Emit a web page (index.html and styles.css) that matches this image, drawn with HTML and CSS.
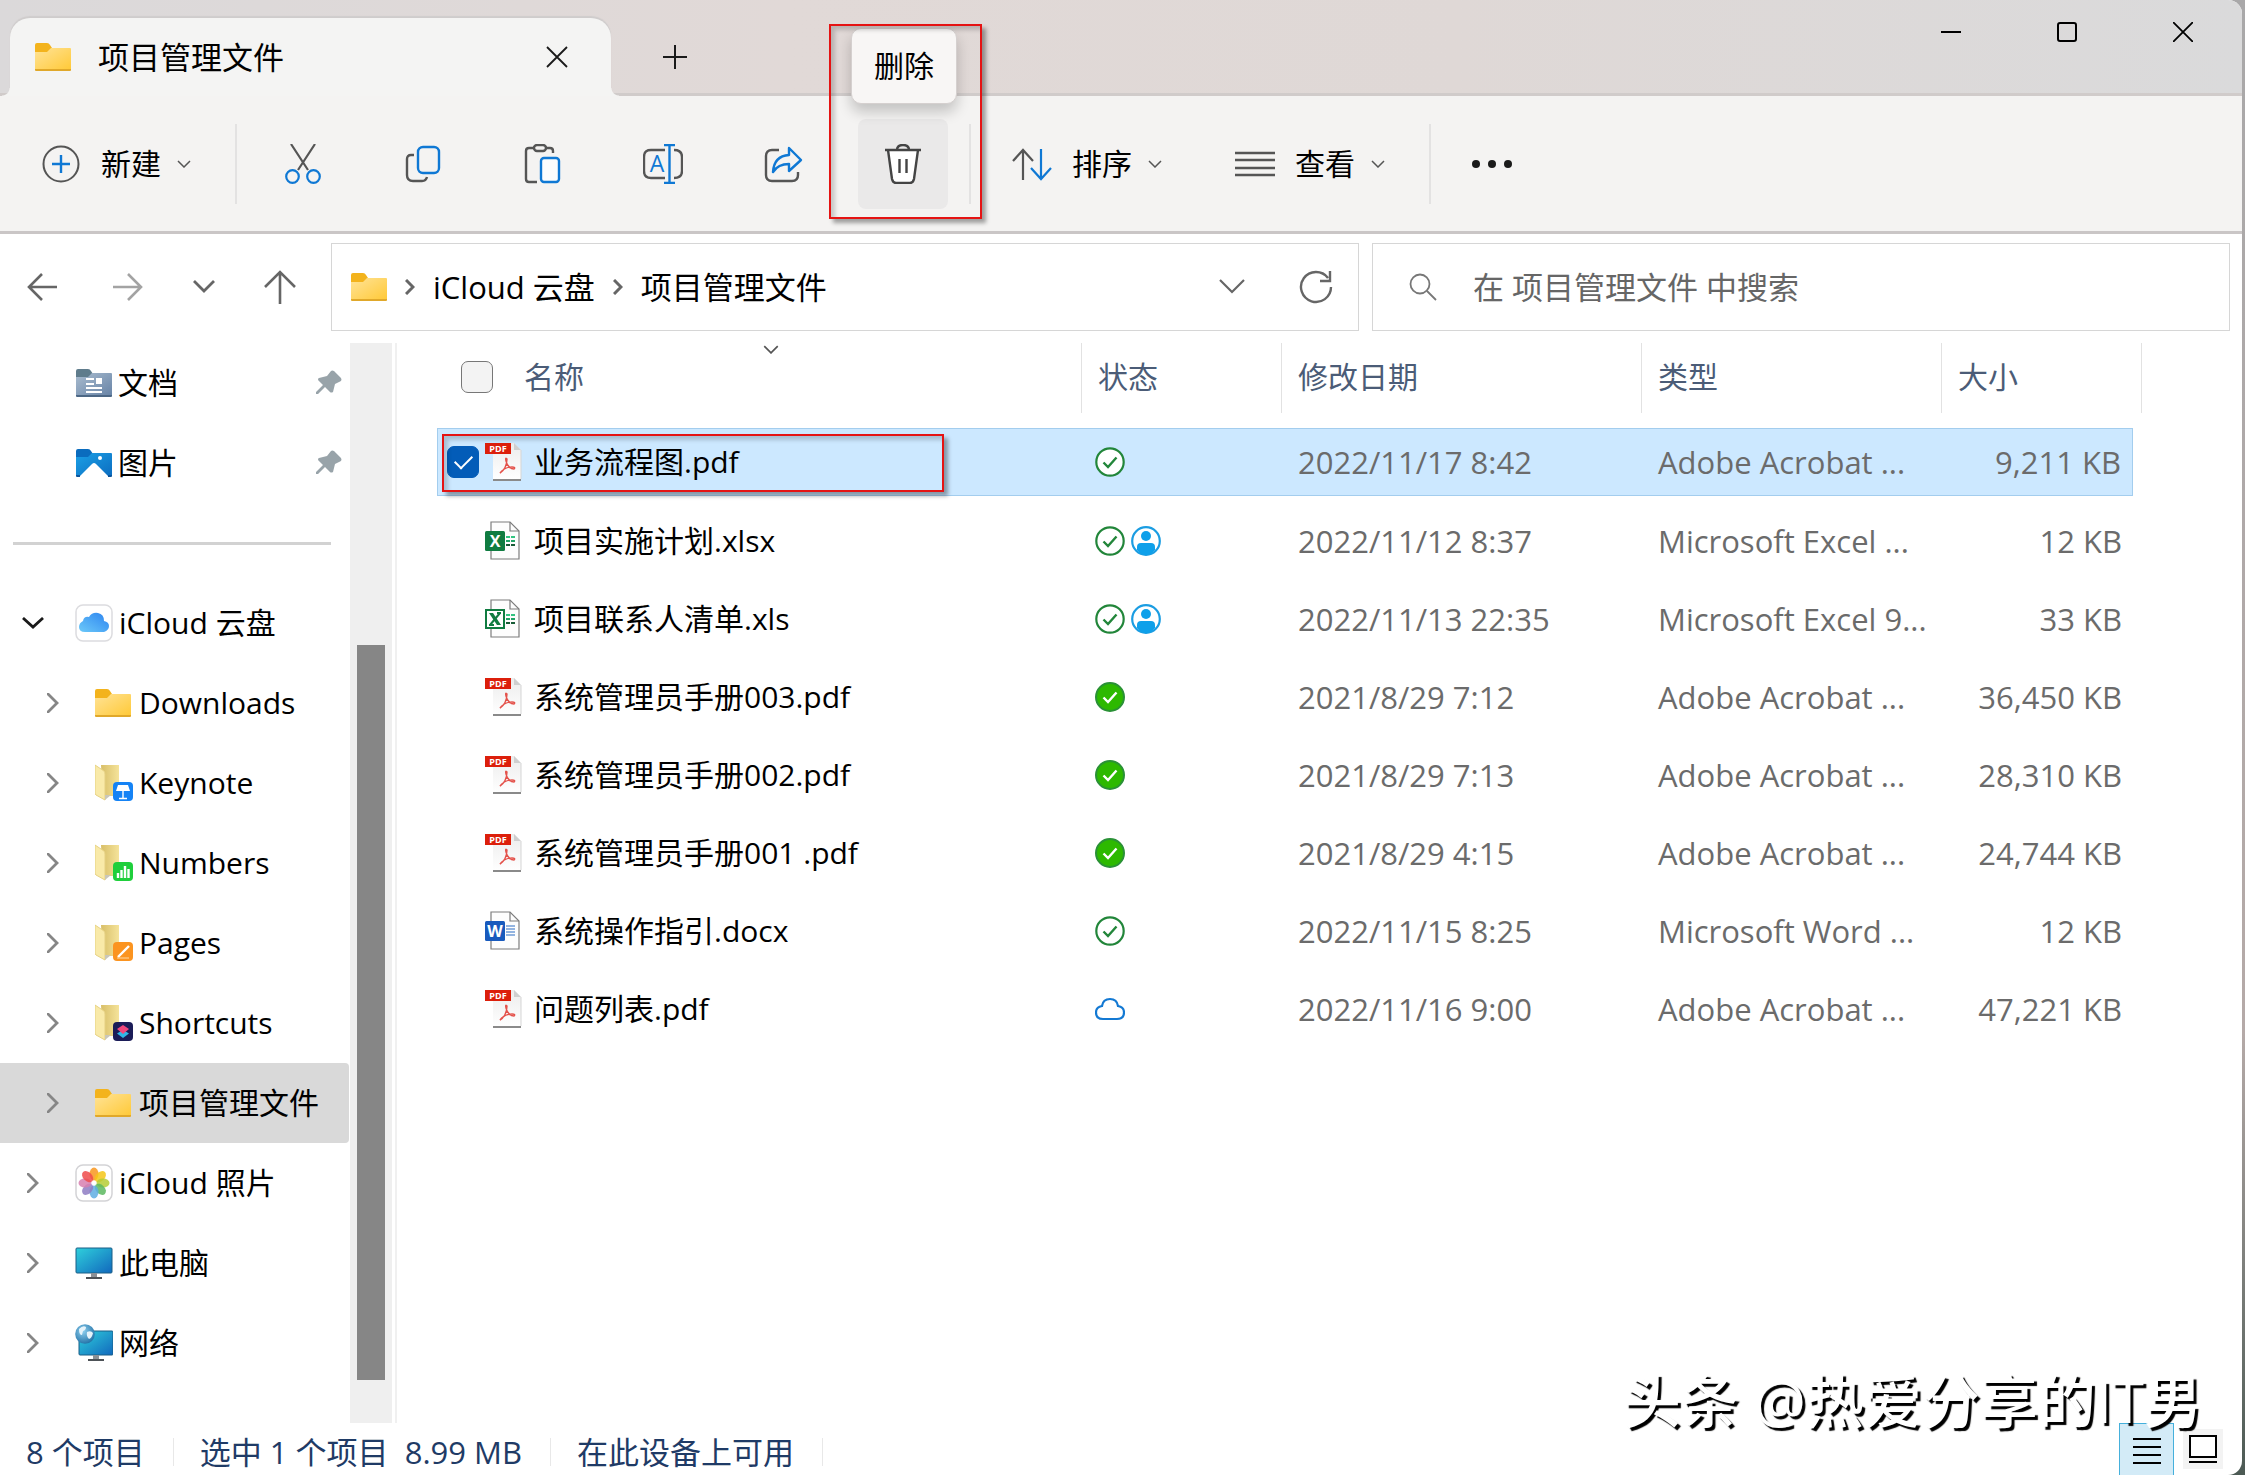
FILE: index.html
```
<!DOCTYPE html>
<html lang="zh-CN">
    <head>
        <meta charset="UTF-8">
        <meta name="viewport" content="width=device-width, initial-scale=1.0">
        <title>项目管理文件</title>
        <link rel="stylesheet" href="styles.css">
    </head>
    <body>
        <!-- shared icons -->
        <svg class="defs" width="0" height="0">
            <defs>
                <linearGradient id="gFolder" x1="0" y1="0" x2="1" y2="1">
                    <stop offset="0" stop-color="#ffe397"/>
                    <stop offset="1" stop-color="#ffc937"/>
                </linearGradient>
                <linearGradient id="gDoc" x1="0" y1="0" x2="1" y2="1">
                    <stop offset="0" stop-color="#a9bccf"/>
                    <stop offset="1" stop-color="#6783a6"/>
                </linearGradient>
                <linearGradient id="gPic" x1="0" y1="0" x2="1" y2="1">
                    <stop offset="0" stop-color="#1ba0e6"/>
                    <stop offset="1" stop-color="#0c6dc0"/>
                </linearGradient>
                <linearGradient id="gCloud" x1="0" y1="1" x2="1" y2="0">
                    <stop offset="0" stop-color="#6cc9f9"/>
                    <stop offset="1" stop-color="#2c84f0"/>
                </linearGradient>
                <linearGradient id="gOpen" x1="0" y1="0" x2="1" y2="0">
                    <stop offset="0" stop-color="#d8bf68"/>
                    <stop offset="1" stop-color="#f5e39a"/>
                </linearGradient>
                <linearGradient id="gScreen" x1="0" y1="0" x2="1" y2="1">
                    <stop offset="0" stop-color="#2fd0dc"/>
                    <stop offset="1" stop-color="#1168bd"/>
                </linearGradient>
                <linearGradient id="gPage" x1="0" y1="0" x2="0" y2="1">
                    <stop offset="0" stop-color="#ececec"/>
                    <stop offset="1" stop-color="#ffffff"/>
                </linearGradient>
                <radialGradient id="gGlobe" cx="0.4" cy="0.35" r="0.7">
                    <stop offset="0" stop-color="#8fd0ef"/>
                    <stop offset="1" stop-color="#1f6fa5"/>
                </radialGradient>
            </defs>
            <symbol id="folder" viewBox="0 0 36 28">
                <path d="M0 10V2q0-2 2-2h10q2 0 3 2l2 3-2 5z" fill="#f3b31c"/>
                <path d="M0 9h12l4-4h19q1 0 1 1v20q0 1-1 1H1q-1 0-1-1z" fill="url(#gFolder)"/>
                <path d="M0 26h36v1q0 1-1 1H1q-1 0-1-1z" fill="#e0a82a"/>
            </symbol>
            <symbol id="folderDoc" viewBox="0 0 36 28">
                <path d="M0 8V2q0-2 2-2h10q2 0 3 2l2 3-2 4z" fill="#5f7c8c"/>
                <path d="M0 8h12l4-4h19q1 0 1 1v21q0 1-1 1H1q-1 0-1-1z" fill="url(#gDoc)"/>
                <path d="M0 26h36v1q0 1-1 1H1q-1 0-1-1z" fill="#4c6785"/>
                <path d="M10 10h8M10 15h8M10 19h16M10 23h16" stroke="#fff" stroke-width="2"/>
                <rect x="20" y="9" width="6" height="6" fill="#fff"/>
            </symbol>
            <symbol id="folderPic" viewBox="0 0 36 28">
                <path d="M0 8V2q0-2 2-2h10q2 0 3 2l2 3-2 4z" fill="#0a6cbe"/>
                <path d="M0 8h12l4-4h19q1 0 1 1v21q0 1-1 1H1q-1 0-1-1z" fill="url(#gPic)"/>
                <path d="M4 27l12-12q2-2 4 0l12 12z" fill="#fff"/>
                <circle cx="24" cy="9" r="2" fill="#fff"/>
                <path d="M0 26h4v2H1q-1 0-1-1zM32 26h4v1q0 1-1 1h-3z" fill="#0b559d"/>
            </symbol>
            <symbol id="openFolder" viewBox="0 0 38 38">
                <path d="M6 1h18v31H8z" fill="url(#gOpen)"/>
                <path d="M0 1l9 6q1 1 1 3v26L1 31q-1-1-1-2z" fill="#f9eaa9" stroke="#e6d183" stroke-width="1"/>
                <path d="M10 36l6-5H10z" fill="#c9c6ba"/>
            </symbol>
            <symbol id="pin" viewBox="0 0 26 26">
                <path d="M15 1q1-1 3 0l7 7q1 2 0 3l-6 3-2 8q-2 1-3 0L9 17l-7 7H0v-2l7-7-5-5q0-2 1-2l8-2z" fill="#98a3a9"/>
            </symbol>
            <symbol id="right" viewBox="0 0 12 20">
                <path d="M1 1l9 9-9 9" fill="none" stroke="#868686" stroke-width="2.8" stroke-linecap="round"/>
            </symbol>
            <symbol id="chev" viewBox="0 0 14 8">
                <path d="M1 1l6 6 6-6" fill="none" stroke="#555" stroke-width="1.5"/>
            </symbol>
            <symbol id="pdf" viewBox="0 0 38 40">
                <path d="M8 1h21l7 7v30H8z" fill="url(#gPage)"/>
                <path d="M8 38h28" stroke="#8a8a8a" stroke-width="2"/>
                <path d="M36 8v29" stroke="#d5d5d5" stroke-width="1"/>
                <path d="M29 1v7h7z" fill="#cfcfcf"/>
                <rect x="0" y="1" width="26" height="11" fill="#dc1f0b"/>
                <path d="M15 31c4-2 7-8 7-14q-2-2-1 2c1 5 5 8 8 8q2-2-2-2c-4 0-9 2-12 6z" fill="none" stroke="#e4524b" stroke-width="1.4"/>
            </symbol>
            <symbol id="page" viewBox="0 0 38 40">
                <path d="M6 1h19l9 9v28H6z" fill="#fdfdfd" stroke="#7d7d7d" stroke-width="1.2"/>
                <path d="M25 1v9h9" fill="none" stroke="#7d7d7d" stroke-width="1.2"/>
            </symbol>
            <symbol id="xlsx" viewBox="0 0 38 40">
                <use href="#page"/>
                <path d="M21 16h4M26 16h4" stroke="#33c481" stroke-width="2"/>
                <path d="M21 20h4M26 20h4" stroke="#21a366" stroke-width="2"/>
                <path d="M21 24h4M26 24h4" stroke="#185c37" stroke-width="2"/>
                <rect x="0" y="10" width="20" height="20" rx="1.5" fill="#107c41"/>
            </symbol>
            <symbol id="xls" viewBox="0 0 38 40">
                <use href="#page"/>
                <path d="M21 16h4M26 16h4" stroke="#33c481" stroke-width="2"/>
                <path d="M21 20h4M26 20h4" stroke="#21a366" stroke-width="2"/>
                <path d="M21 24h4M26 24h4" stroke="#185c37" stroke-width="2"/>
                <rect x="1" y="11" width="18" height="18" fill="#fff" stroke="#107c41" stroke-width="2"/>
                <path d="M4 14h4l8 12h-4z" fill="#107c41"/>
                <path d="M15 14L5 26M12 14h4M4 26h5" stroke="#107c41" stroke-width="2"/>
            </symbol>
            <symbol id="docx" viewBox="0 0 38 40">
                <use href="#page"/>
                <path d="M21 15h9M21 18h9M21 21h9M21 24h9" stroke="#2b6cc4" stroke-width="1.2"/>
                <rect x="0" y="10" width="20" height="20" rx="1.5" fill="#185abd"/>
            </symbol>
            <symbol id="okOpen" viewBox="0 0 30 30">
                <circle cx="15" cy="15" r="13.7" fill="#fff" stroke="#22863a" stroke-width="2.2"/>
                <path d="M8.500 15.500l4.500 4.500 8.500-9.500" fill="none" stroke="#22863a" stroke-width="2.4"/>
            </symbol>
            <symbol id="okFull" viewBox="0 0 30 30">
                <circle cx="15" cy="15" r="14" fill="#2db900" stroke="#2a9136" stroke-width="2"/>
                <path d="M8.500 15.500l4.500 4.500 8.500-9.500" fill="none" stroke="#fff" stroke-width="2.4"/>
            </symbol>
            <symbol id="person" viewBox="0 0 30 30">
                <circle cx="15" cy="15" r="13.800" fill="#fff" stroke="#1b9de2" stroke-width="2.2"/>
                <circle cx="15" cy="10" r="5" fill="#0ea0ea"/>
                <path d="M6 24v-3q0-4 4-4h10q4 0 4 4v3q-4 5-9 5t-9-5z" fill="#0ea0ea"/>
            </symbol>
            <symbol id="cloud" viewBox="0 0 30 24">
                <path d="M8 22q-7 0-7-6.500Q1 10 7 9q1-7 8-7t8 7q6 1 6 6.500Q29 22 22 22z" fill="none" stroke="#1379d3" stroke-width="2.2"/>
            </symbol>
        </svg>

        <div class="window">
            <header class="titlebar">
                <div class="tab">
                    <svg class="ico36" viewBox="0 0 36 28"><use href="#folder"/></svg>
                    <span class="tab-name">项目管理文件</span>
                    <button class="tab-close" aria-label="关闭标签页">
                        <svg width="22" height="22" viewBox="0 0 22 22"><path d="M1 1l20 20M21 1L1 21" stroke="#1a1a1a" stroke-width="1.8"/></svg>
                    </button>
                </div>
                <button class="tab-add" aria-label="新标签页">
                    <svg width="24" height="24" viewBox="0 0 24 24"><path d="M12 0v24M0 12h24" stroke="#1a1a1a" stroke-width="2"/></svg>
                </button>
                <div class="controls">
                    <button aria-label="最小化"><svg width="20" height="20" viewBox="0 0 20 20"><path d="M0 10h20" stroke="#000" stroke-width="2"/></svg></button>
                    <button aria-label="最大化"><svg width="20" height="20" viewBox="0 0 20 20"><rect x="1" y="1" width="18" height="18" rx="2" fill="none" stroke="#000" stroke-width="2"/></svg></button>
                    <button aria-label="关闭"><svg width="20" height="20" viewBox="0 0 20 20"><path d="M0 0l20 20M20 0L0 20" stroke="#000" stroke-width="1.8"/></svg></button>
                </div>
            </header>

            <div class="toolbar">
                <button class="menu-btn">
                    <svg width="40" height="40" viewBox="0 0 40 40"><circle cx="20" cy="20" r="17.500" fill="none" stroke="#555" stroke-width="2"/><path d="M20 11v18M11 20h18" stroke="#0f78d4" stroke-width="2.400"/></svg>
                    <span>新建</span>
                    <svg class="caret" width="14" height="8"><use href="#chev"/></svg>
                </button>
                <span class="divider"></span>
                <div class="actions">
                    <button aria-label="剪切">
                        <svg width="40" height="40" viewBox="0 0 40 40" fill="none" stroke-width="2.200"><path d="M8 0l17 26M32 0L15 26" stroke="#555"/><circle cx="9.500" cy="32.500" r="6.300" stroke="#0f78d4"/><circle cx="30.500" cy="32.500" r="6.300" stroke="#0f78d4"/></svg>
                    </button>
                    <button aria-label="复制">
                        <svg width="40" height="40" viewBox="0 0 40 40" fill="none" stroke-width="2.400"><path d="M11 11H8q-4 0-4 4v16q0 6 6 6h9q4 0 5-4" stroke="#555"/><rect x="15" y="3" width="21" height="26" rx="5" stroke="#0f78d4"/></svg>
                    </button>
                    <button aria-label="粘贴">
                        <svg width="40" height="40" viewBox="0 0 40 40" fill="none" stroke-width="2.400"><path d="M11 4H6q-3 0-3 3v28q0 3 3 3h8M23 4h4q3 0 3 3v2" stroke="#555"/><rect x="11" y="1" width="12" height="6" rx="3" stroke="#555"/><rect x="18" y="14" width="18" height="24" rx="3" stroke="#0f78d4" fill="#fdfdfd"/></svg>
                    </button>
                    <button aria-label="重命名">
                        <svg width="40" height="40" viewBox="0 0 40 40" fill="none" stroke-width="2.400"><path d="M22 6H8q-7 0-7 7v14q0 7 7 7h14M31 6q8 0 8 7v14q0 7-8 7" stroke="#555"/><path d="M26.500 1v38M21 1h11M21 39h11" stroke="#0f78d4"/><text class="rename-a" x="14" y="28">A</text></svg>
                    </button>
                    <button aria-label="共享">
                        <svg width="40" height="40" viewBox="0 0 40 40" fill="none" stroke-width="2.400"><path d="M16 6H9q-6 0-6 6v19q0 6 6 6h20q6 0 6-6v-3" stroke="#555"/><path d="M26 4l12 12-12 11v-7q-11 0-16 8 1-16 16-17z" stroke="#0f78d4" stroke-linejoin="round"/></svg>
                    </button>
                    <div class="delete">
                        <button class="hovered" aria-label="删除">
                            <svg width="40" height="40" viewBox="0 0 40 40" fill="none" stroke="#444" stroke-width="2.400"><path d="M14 6q0-5 6-5t6 5"/><path d="M5 6l4 29q1 4 4 4h14q3 0 4-4l4-29" fill="#fff"/><path d="M2 6h36"/><path d="M16.500 15v14M23.500 15v14"/></svg>
                        </button>
                        <span class="tooltip">删除</span>
                        <span class="mark mark-delete"></span>
                    </div>
                </div>
                <span class="divider"></span>
                <button class="menu-btn">
                    <svg width="40" height="40" viewBox="0 0 40 40" fill="none" stroke-width="2.200"><path d="M11 36V6M1 17L11 6l10 11" stroke="#555"/><path d="M29 5v30M19 24l10 11 10-11" stroke="#0f78d4"/></svg>
                    <span>排序</span>
                    <svg class="caret" width="14" height="8"><use href="#chev"/></svg>
                </button>
                <button class="menu-btn menu-view">
                    <svg width="40" height="40" viewBox="0 0 40 40"><path d="M0 9h40M0 16h40M0 24h40M0 31h40" stroke="#555" stroke-width="2.400"/></svg>
                    <span>查看</span>
                    <svg class="caret" width="14" height="8"><use href="#chev"/></svg>
                </button>
                <span class="divider"></span>
                <button class="menu-btn" aria-label="更多">
                    <svg width="40" height="40" viewBox="0 0 40 40" fill="#1a1a1a"><circle cx="4" cy="20" r="4"/><circle cx="20" cy="20" r="4"/><circle cx="36" cy="20" r="4"/></svg>
                </button>
            </div>

            <div class="address-row">
                <div class="nav-buttons">
                    <button aria-label="后退"><svg width="30" height="28" viewBox="0 0 30 28" fill="none" stroke="#666" stroke-width="2.600"><path d="M30 14H2M15 1L2 14l13 13"/></svg></button>
                    <button aria-label="前进"><svg width="30" height="28" viewBox="0 0 30 28" fill="none" stroke="#a3a3a3" stroke-width="2.600"><path d="M0 14h28M15 1l13 13-13 13"/></svg></button>
                    <button class="small" aria-label="最近位置"><svg width="22" height="14" viewBox="0 0 22 14" fill="none" stroke="#666" stroke-width="2.800"><path d="M1 1l10 10L21 1"/></svg></button>
                    <button aria-label="向上"><svg width="32" height="34" viewBox="0 0 32 34" fill="none" stroke="#666" stroke-width="2.600"><path d="M16 34V2M1 17L16 2l15 15"/></svg></button>
                </div>
                <div class="address">
                    <svg class="ico36" viewBox="0 0 36 28"><use href="#folder"/></svg>
                    <svg class="crumb-sep" width="10" height="16" viewBox="0 0 10 16"><path d="M1 1l7 7-7 7" fill="none" stroke="#666" stroke-width="3"/></svg>
                    <a href="#">iCloud 云盘</a>
                    <svg class="crumb-sep" width="10" height="16" viewBox="0 0 10 16"><path d="M1 1l7 7-7 7" fill="none" stroke="#666" stroke-width="3"/></svg>
                    <a href="#">项目管理文件</a>
                    <button class="history" aria-label="历史记录"><svg width="26" height="16" viewBox="0 0 26 16" fill="none" stroke="#666" stroke-width="2.200"><path d="M1 1l12 12L25 1"/></svg></button>
                    <button aria-label="刷新"><svg width="34" height="34" viewBox="0 0 34 34" fill="none" stroke="#666" stroke-width="2.400"><path d="M29 8A15 15 0 1 0 32 17M31 1v10H21"/></svg></button>
                </div>
                <label class="search">
                    <svg width="28" height="28" viewBox="0 0 28 28" fill="none" stroke="#777" stroke-width="1.800"><circle cx="11" cy="11" r="9.500"/><path d="M18 18l9 9"/></svg>
                    <input type="text" placeholder="在 项目管理文件 中搜索" aria-label="搜索">
                </label>
            </div>

            <div class="main">
                <nav class="sidebar">
                    <a class="item quick" href="#"><svg class="ico36" viewBox="0 0 36 28"><use href="#folderDoc"/></svg>文档<svg class="pin" width="26" height="26"><use href="#pin"/></svg></a>
                    <a class="item quick" href="#"><svg class="ico36" viewBox="0 0 36 28"><use href="#folderPic"/></svg>图片<svg class="pin" width="26" height="26"><use href="#pin"/></svg></a>
                    <hr>
                    <a class="item open" href="#">
                        <svg class="arrow" width="22" height="12" viewBox="0 0 22 12"><path d="M1 1l10 9L21 1" fill="none" stroke="#1a1a1a" stroke-width="2.800"/></svg>
                        <svg class="ico38" viewBox="0 0 38 38"><rect x="1" y="1" width="36" height="36" rx="7" fill="#fff" stroke="#dcdcdf" stroke-width="1.500"/><path d="M10 28q-6 0-6-5 0-4 4-6 1-5 6-4 3-5 9-4 6 1 6 8 5 1 5 5t-5 6z" fill="url(#gCloud)"/></svg>
                        iCloud 云盘
                    </a>
                    <a class="item child" href="#"><svg class="arrow" width="12" height="20"><use href="#right"/></svg><svg class="ico36" viewBox="0 0 36 28"><use href="#folder"/></svg>Downloads</a>
                    <a class="item child" href="#"><svg class="arrow" width="12" height="20"><use href="#right"/></svg>
                        <svg class="ico38" viewBox="0 0 38 38"><use href="#openFolder"/><rect x="18" y="18" width="20" height="19" rx="4" fill="#1583f5"/><path d="M23 21h10l2 6H21z" fill="#fff"/><path d="M28 27v7M24 34.500h8" stroke="#fff" stroke-width="1.400"/></svg>Keynote</a>
                    <a class="item child" href="#"><svg class="arrow" width="12" height="20"><use href="#right"/></svg>
                        <svg class="ico38" viewBox="0 0 38 38"><use href="#openFolder"/><rect x="18" y="18" width="20" height="19" rx="4" fill="#1fcf3c"/><path d="M23 34v-5M26.500 34v-8M30 34V22M33.500 34v-9" stroke="#fff" stroke-width="2.400"/></svg>Numbers</a>
                    <a class="item child" href="#"><svg class="arrow" width="12" height="20"><use href="#right"/></svg>
                        <svg class="ico38" viewBox="0 0 38 38"><use href="#openFolder"/><rect x="18" y="18" width="20" height="19" rx="4" fill="#fb9420"/><path d="M23 33l11-11" stroke="#fff" stroke-width="2.400"/><path d="M22 34h12" stroke="#ffd9a3" stroke-width="1"/></svg>Pages</a>
                    <a class="item child" href="#"><svg class="arrow" width="12" height="20"><use href="#right"/></svg>
                        <svg class="ico38" viewBox="0 0 38 38"><use href="#openFolder"/><rect x="18" y="18" width="20" height="19" rx="4" fill="#1b1c58"/><path d="M28 26l6 3.500-6 4.500-6-4.500z" fill="#2fb7e8"/><path d="M28 21l6 4-6 5-6-5z" fill="#f0467c"/></svg>Shortcuts</a>
                    <a class="item child current" href="#"><svg class="arrow" width="12" height="20"><use href="#right"/></svg><svg class="ico36" viewBox="0 0 36 28"><use href="#folder"/></svg>项目管理文件</a>
                    <a class="item" href="#"><svg class="arrow" width="12" height="20"><use href="#right"/></svg>
                        <svg class="ico38" viewBox="0 0 38 38"><rect x="1" y="1" width="36" height="36" rx="7" fill="#fff" stroke="#d3d3d6" stroke-width="1.500"/>
                            <g fill-opacity="0.850"><ellipse cx="19" cy="10" rx="4.500" ry="6.500" fill="#f8961e"/><ellipse cx="19" cy="10" rx="4.500" ry="6.500" fill="#f5c518" transform="rotate(45 19 19)"/><ellipse cx="19" cy="10" rx="4.500" ry="6.500" fill="#b5cc34" transform="rotate(90 19 19)"/><ellipse cx="19" cy="10" rx="4.500" ry="6.500" fill="#5cb85f" transform="rotate(135 19 19)"/><ellipse cx="19" cy="10" rx="4.500" ry="6.500" fill="#5faee3" transform="rotate(180 19 19)"/><ellipse cx="19" cy="10" rx="4.500" ry="6.500" fill="#8e7cc3" transform="rotate(225 19 19)"/><ellipse cx="19" cy="10" rx="4.500" ry="6.500" fill="#d77fb0" transform="rotate(270 19 19)"/><ellipse cx="19" cy="10" rx="4.500" ry="6.500" fill="#ee4b4b" transform="rotate(315 19 19)"/></g></svg>iCloud 照片</a>
                    <a class="item" href="#"><svg class="arrow" width="12" height="20"><use href="#right"/></svg>
                        <svg class="ico38" viewBox="0 0 38 38"><rect x="1" y="4" width="36" height="25" rx="1" fill="url(#gScreen)" stroke="#1a5f86" stroke-width="1"/><path d="M16 29h6v4h-6z" fill="#8b9096"/><path d="M11 34h16" stroke="#4d5257" stroke-width="2"/></svg>此电脑</a>
                    <a class="item" href="#"><svg class="arrow" width="12" height="20"><use href="#right"/></svg>
                        <svg class="ico38" viewBox="0 0 38 38"><rect x="4" y="7" width="34" height="24" rx="1" fill="url(#gScreen)" stroke="#1a5f86" stroke-width="1"/><path d="M18 31h6v4h-6z" fill="#8b9096"/><path d="M13 36h16" stroke="#4d5257" stroke-width="2"/><circle cx="10" cy="10" r="9.800" fill="url(#gGlobe)"/><path d="M4 5q4-4 7-2 0 3-3 4l-1 4q-3 0-3-6zM12 8q4-2 6 1-1 5-4 6-3-3-2-7z" fill="#e6f3fa"/></svg>网络</a>
                </nav>
                <div class="scrollbar"><div class="thumb"></div></div>

                <div class="files">
                    <table>
                        <colgroup>
                            <col class="c-name"><col class="c-state"><col class="c-date"><col class="c-type"><col class="c-size"><col class="c-end">
                        </colgroup>
                        <thead>
                            <tr>
                                <th class="name-head">
                                    <div class="col">
                                        <input type="checkbox" id="all" aria-label="全选">
                                        <label for="all">名称</label>
                                        <svg class="sort" width="16" height="9" viewBox="0 0 14 8"><use href="#chev"/></svg>
                                    </div>
                                </th>
                                <th><div class="col">状态</div></th>
                                <th><div class="col">修改日期</div></th>
                                <th><div class="col">类型</div></th>
                                <th colspan="2"><div class="col">大小</div></th>
                            </tr>
                        </thead>
                        <tbody>
                            <tr class="selected">
                                <td><div class="name"><input type="checkbox" aria-label="业务流程图.pdf" checked><svg class="file"><use href="#pdf"/><text class="t-pdf" x="13" y="10">PDF</text></svg>业务流程图.pdf</div><span class="mark mark-row"></span></td>
                                <td><div class="state"><svg><use href="#okOpen"/></svg></div></td>
                                <td>2022/11/17 8:42</td><td>Adobe Acrobat ...</td><td>9,211 KB</td>
                            </tr>
                            <tr>
                                <td><div class="name"><svg class="file"><use href="#xlsx"/><text class="t-office" x="10" y="26">X</text></svg>项目实施计划.xlsx</div></td>
                                <td><div class="state"><svg><use href="#okOpen"/></svg><svg><use href="#person"/></svg></div></td>
                                <td>2022/11/12 8:37</td><td>Microsoft Excel ...</td><td>12 KB</td>
                            </tr>
                            <tr>
                                <td><div class="name"><svg class="file"><use href="#xls"/></svg>项目联系人清单.xls</div></td>
                                <td><div class="state"><svg><use href="#okOpen"/></svg><svg><use href="#person"/></svg></div></td>
                                <td>2022/11/13 22:35</td><td>Microsoft Excel 9...</td><td>33 KB</td>
                            </tr>
                            <tr>
                                <td><div class="name"><svg class="file"><use href="#pdf"/><text class="t-pdf" x="13" y="10">PDF</text></svg>系统管理员手册003.pdf</div></td>
                                <td><div class="state"><svg><use href="#okFull"/></svg></div></td>
                                <td>2021/8/29 7:12</td><td>Adobe Acrobat ...</td><td>36,450 KB</td>
                            </tr>
                            <tr>
                                <td><div class="name"><svg class="file"><use href="#pdf"/><text class="t-pdf" x="13" y="10">PDF</text></svg>系统管理员手册002.pdf</div></td>
                                <td><div class="state"><svg><use href="#okFull"/></svg></div></td>
                                <td>2021/8/29 7:13</td><td>Adobe Acrobat ...</td><td>28,310 KB</td>
                            </tr>
                            <tr>
                                <td><div class="name"><svg class="file"><use href="#pdf"/><text class="t-pdf" x="13" y="10">PDF</text></svg>系统管理员手册001 .pdf</div></td>
                                <td><div class="state"><svg><use href="#okFull"/></svg></div></td>
                                <td>2021/8/29 4:15</td><td>Adobe Acrobat ...</td><td>24,744 KB</td>
                            </tr>
                            <tr>
                                <td><div class="name"><svg class="file"><use href="#docx"/><text class="t-office" x="10" y="26">W</text></svg>系统操作指引.docx</div></td>
                                <td><div class="state"><svg><use href="#okOpen"/></svg></div></td>
                                <td>2022/11/15 8:25</td><td>Microsoft Word ...</td><td>12 KB</td>
                            </tr>
                            <tr>
                                <td><div class="name"><svg class="file"><use href="#pdf"/><text class="t-pdf" x="13" y="10">PDF</text></svg>问题列表.pdf</div></td>
                                <td><div class="state"><svg><use href="#cloud"/></svg></div></td>
                                <td>2022/11/16 9:00</td><td>Adobe Acrobat ...</td><td>47,221 KB</td>
                            </tr>
                        </tbody>
                    </table>
                </div>
            </div>

            <footer class="statusbar">
                <span class="stat">8 个项目</span>
                <span class="stat">选中 1 个项目&nbsp; 8.99 MB</span>
                <span class="stat">在此设备上可用</span>
                <div class="views">
                    <button class="on" aria-label="详细信息"><svg width="28" height="28" viewBox="0 0 28 28"><path d="M0 3h28M0 11h28M0 19h28M0 27h28" stroke="#000" stroke-width="2"/></svg></button>
                    <button aria-label="大图标"><svg width="28" height="28" viewBox="0 0 28 28"><rect x="1" y="1" width="26" height="21" fill="#fff" stroke="#000" stroke-width="2"/><path d="M0 27h28" stroke="#000" stroke-width="2"/></svg></button>
                </div>
            </footer>
            <div class="watermark">头条 @热爱分享的IT男</div>
        </div>
    </body>
</html>
```
FILE: styles.css
```
*{
    box-sizing: border-box;
}
body {
    margin: 0;
    background: linear-gradient(#a9a8a9, #b5aaa8 70%, #4c5a54);
    font-family: "Open Sans", "Noto Sans CJK SC", sans-serif;
    font-size: 30px;
    line-height: 40px;
    color: #000;
}
button{
    border: none;
    background: none;
    padding: 0;
    font: inherit;
    color: inherit;
    display: flex;
    align-items: center;
    justify-content: center;
}
a{
    color: inherit;
    text-decoration: none;
}
svg{
    flex: none;
    display: block;
}
.defs{
    position: absolute;
}
.window{
    position: relative;
    margin-right: 3px;
    height: 100vh;
    display: flex;
    flex-direction: column;
    background: #fff;
    border-radius: 0 14px 14px 0;
    overflow: hidden;
}
.ico36{
    width: 36px;
    height: 28px;
}
.ico38{
    width: 38px;
    height: 38px;
}
.tab, .address-row, .statusbar{
    font-size: 31px;
}

/* title bar */
.titlebar{
    height: 96px;
    flex: none;
    display: flex;
    align-items: flex-start;
    padding: 0 1px 0 10px;
    background: linear-gradient(90deg, #dbd9da, #e1d9d7 35%, #dfd8d6 65%, #dadadb);
    box-shadow: inset 0 -3px #d0cbca;
}
.tab{
    position: relative;
    width: 601px;
    height: 78px;
    margin-top: 18px;
    padding: 0 33px 0 25px;
    display: flex;
    align-items: center;
    background: #f4f4f3;
    border-radius: 20px 20px 0 0;
    box-shadow: 0 -2px 1px #cfcccc;
}
.tab::before, .tab::after{
    content: "";
    position: absolute;
    bottom: 0;
    width: 8px;
    height: 8px;
}
.tab::before{
    left: -8px;
    background: radial-gradient(circle at 0 0, transparent 7px, #f4f4f3 8px);
}
.tab::after{
    right: -8px;
    background: radial-gradient(circle at 100% 0, transparent 7px, #f4f4f3 8px);
}
.tab-name{
    margin-left: 27px;
}
.tab-close{
    width: 42px;
    height: 42px;
    margin-left: auto;
}
.tab-add{
    width: 60px;
    height: 60px;
    margin: 27px 0 0 34px;
}
.controls{
    display: flex;
    margin-left: auto;
}
.controls button{
    width: 116px;
    height: 64px;
}

/* command bar */
.toolbar{
    height: 138px;
    flex: none;
    display: flex;
    align-items: center;
    padding-left: 29px;
    background: #f4f3f2;
    border-bottom: 3px solid #cac6c6;
}
.menu-btn{
    height: 80px;
    padding: 0 12px;
    gap: 20px;
}
.menu-btn .caret{
    margin-left: -4px;
}
.menu-view{
    margin-left: 49px;
}
.menu-btn + .divider{
    margin-left: 32px;
}
.divider{
    width: 2px;
    height: 80px;
    margin: 0 21px;
    background: #e3e2e2;
}
.divider + .menu-btn{
    margin-left: 8px;
}
.actions{
    display: flex;
    gap: 30px;
}
.actions button{
    width: 90px;
    height: 90px;
    border-radius: 8px;
}
.actions .hovered{
    background: #eae9e9;
}
.rename-a{
    font-size: 23px;
    text-anchor: middle;
    fill: #0f78d4;
    stroke: none;
}
.delete{
    position: relative;
}
.tooltip{
    position: absolute;
    left: -7px;
    bottom: 105px;
    z-index: 2;
    width: 106px;
    height: 76px;
    line-height: 74px;
    text-align: center;
    white-space: nowrap;
    background: #f8f6f5;
    border: 1px solid #d5d0cf;
    border-radius: 10px;
    box-shadow: 0 8px 14px rgba(0, 0, 0, 0.2);
}
/* red annotation frames */
.mark{
    position: absolute;
    z-index: 3;
    border: 2px solid #e51313;
    box-shadow: 4px 4px 4px rgba(0, 0, 0, 0.35), inset 4px 4px 4px rgba(0, 0, 0, 0.18);
    pointer-events: none;
}
.mark-delete{
    left: -29px;
    top: -95px;
    width: 153px;
    height: 195px;
}
.mark-row{
    left: 4px;
    top: 5px;
    width: 502px;
    height: 58px;
}

/* navigation and address */
.address-row{
    height: 99px;
    flex: none;
    display: grid;
    grid-template-columns: 318px minmax(0, 1028fr) minmax(0, 858fr);
    align-items: center;
    gap: 13px;
    padding: 7px 12px 0 0;
}
.nav-buttons{
    display: flex;
    gap: 26px;
    padding-left: 12px;
}
.nav-buttons button{
    width: 60px;
    height: 60px;
}
.nav-buttons .small{
    width: 40px;
}
.address, .search{
    height: 88px;
    display: flex;
    align-items: center;
    border: 1px solid #d6d6d6;
}
.address{
    padding: 0 25px 0 19px;
}
.search{
    padding: 0 36px;
    gap: 36px;
}
.search input{
    flex: 1;
    min-width: 0;
    border: none;
    outline: none;
    padding: 0;
    background: none;
    font: inherit;
}
.search input::placeholder{
    color: #666;
    opacity: 1;
}
.crumb-sep{
    margin: 0 18px;
}
.history{
    margin-left: auto;
    margin-right: 54px;
}

/* tree */
.main{
    flex: 1;
    min-height: 0;
    display: flex;
    padding-top: 10px;
}
.sidebar{
    width: 349px;
    flex: none;
    overflow: hidden;
}
.item{
    height: 80px;
    display: flex;
    align-items: center;
    padding-left: 27px;
    white-space: nowrap;
}
.item .arrow{
    margin-right: 36px;
}
.item .ico36, .item .ico38{
    margin-right: 6px;
}
.item.quick{
    padding-left: 76px;
}
.item .pin{
    margin: 0 7px 0 auto;
}
.item.open{
    padding-left: 22px;
}
.item.open .arrow{
    margin-right: 31px;
}
.item.child{
    padding-left: 47px;
}
.item.child .ico36{
    margin-right: 8px;
}
.item.current{
    background: #d9d9d9;
    border-radius: 0 4px 4px 0;
}
.sidebar hr{
    height: 3px;
    margin: 39px 18px 38px 13px;
    border: none;
    background: #d2d2d2;
}
.scrollbar{
    position: relative;
    width: 42px;
    margin: 0 3px 0 1px;
    flex: none;
    background: #efefef;
}
.thumb{
    position: absolute;
    left: 7px;
    right: 7px;
    top: 28%;
    height: 68%;
    background: #868686;
}

/* file list */
.files{
    flex: 1;
    min-width: 0;
    padding: 0 100px 0 40px;
    border-left: 2px solid #f0f0f0;
}
table{
    width: 100%;
    table-layout: fixed;
    border-collapse: separate;
    border-spacing: 0;
}
.c-state{
    width: 200px;
}
.c-date{
    width: 360px;
}
.c-type{
    width: 300px;
}
.c-size{
    width: 191px;
}
.c-end{
    width: 9px;
}
th{
    height: 85px;
    padding: 0;
    vertical-align: top;
    text-align: left;
    font-weight: 400;
    color: #4b5c77;
}
.col{
    position: relative;
    height: 70px;
    padding: 0 0 2px 16px;
    display: flex;
    align-items: center;
    border-right: 1px solid #e2e2e2;
}
.name-head .col{
    padding-left: 24px;
}
.name-head label{
    margin-left: 31px;
}
.sort{
    position: absolute;
    top: 2px;
    left: calc(50% + 4px);
}
input[type="checkbox"]{
    appearance: none;
    flex: none;
    width: 32px;
    height: 32px;
    margin: 0;
    border: 1px solid #777;
    border-radius: 7px;
    background: #f3f3f3;
}
input[type="checkbox"]:checked{
    border-color: #035cb8;
    background: #035cb8;
    display: grid;
    place-items: center;
}
input[type="checkbox"]:checked::before{
    content: "";
    width: 15px;
    height: 8px;
    margin-bottom: 5px;
    border: solid #fff;
    border-width: 0 0 2px 2px;
    transform: rotate(-45deg);
}
td{
    position: relative;
    height: 78px;
    padding: 0 0 0 16px;
    color: #6b6b6b;
    font-size: 31px;
    white-space: nowrap;
}
td:first-child{
    padding: 0 0 0 48px;
    color: #000;
    font-size: 30px;
}
td:nth-child(2){
    padding-left: 13px;
}
td:nth-child(5){
    padding-right: 11px;
    text-align: right;
}
.name, .state{
    display: flex;
    align-items: center;
}
.file{
    width: 38px;
    height: 40px;
    margin-right: 11px;
}
.file text{
    font-weight: 700;
    text-anchor: middle;
    fill: #fff;
}
.t-pdf{
    font-size: 9px;
}
.t-office{
    font-size: 16px;
}
.state{
    gap: 6px;
}
.state svg{
    width: 30px;
    height: 30px;
}
.selected td{
    height: 68px;
    background: #cce8ff;
    border: solid #a3cdee;
    border-width: 1px 0;
}
.selected td:first-child{
    padding-left: 9px;
    border-left-width: 1px;
}
.selected td:nth-child(5){
    border-right-width: 1px;
}
.selected input{
    margin-right: 6px;
}
.selected + tr td{
    height: 84px;
    padding-top: 6px;
}

/* status bar */
.statusbar{
    height: 52px;
    flex: none;
    display: flex;
    align-items: center;
    padding-right: 19px;
    color: #1f3b66;
}
.stat{
    height: 28px;
    margin-top: 5px;
    padding: 0 28px 0 26px;
    display: flex;
    align-items: center;
    border-right: 1px solid #e8e8e8;
    white-space: pre;
}
.views{
    display: flex;
    align-self: stretch;
    align-items: center;
    gap: 9px;
    margin-left: auto;
}
.views button{
    width: 40px;
    height: 40px;
    background: #f3f3f3;
}
.views .on{
    width: 55px;
    height: 52px;
    background: #d3ebf7;
    border: 1px solid #45b0dc;
    border-bottom: none;
}
.watermark{
    position: absolute;
    right: 40px;
    bottom: 42px;
    font-size: 58px;
    font-weight: 500;
    line-height: 64px;
    white-space: nowrap;
    color: #fff;
    text-shadow: 3px 3px 1px #000;
}
```
